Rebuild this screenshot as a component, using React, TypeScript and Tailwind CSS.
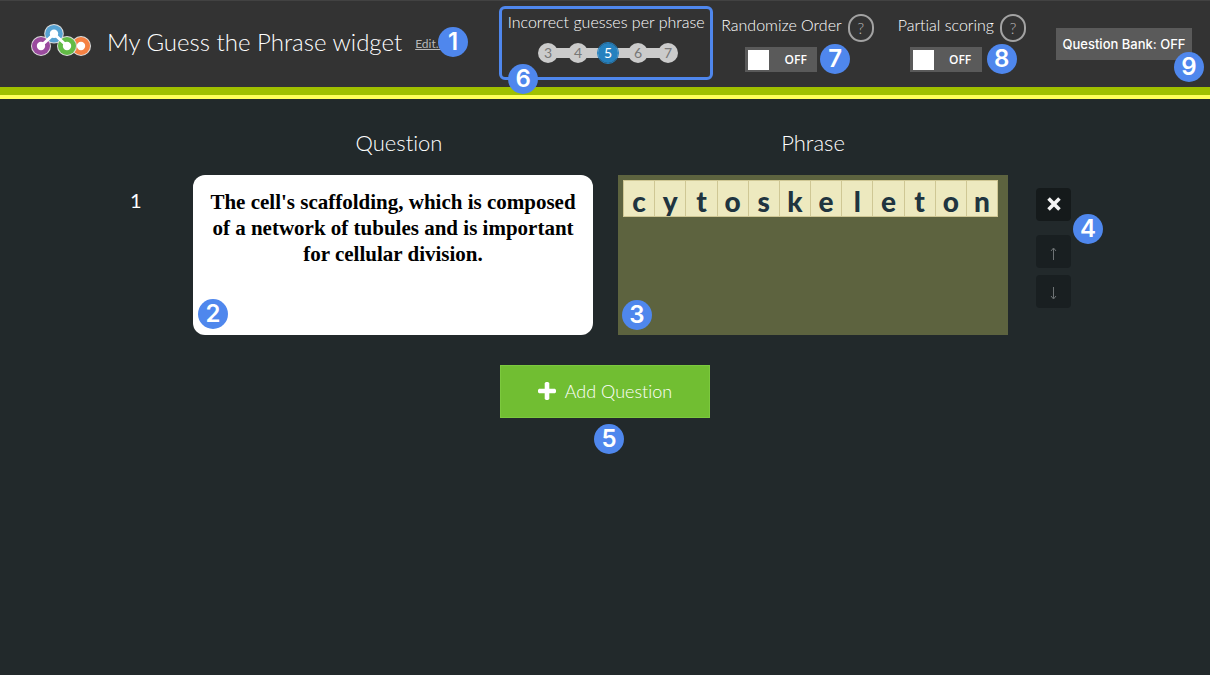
import { useState } from "react";
import type { ReactNode } from "react";

const LATO = "font-['Lato',sans-serif] [font-variant-ligatures:none]";

function Marker({ n, className }: { n: number; className: string }) {
  return (
    <span
      className={`pointer-events-none absolute z-10 flex size-[30px] items-center justify-center rounded-full bg-[#4f87ed] font-['Inter',sans-serif] text-[24px] leading-[30px] font-semibold text-white ${className}`}
    >
      {n}
    </span>
  );
}

function Logo() {
  return (
    <svg viewBox="0 0 62 36" className="h-9 w-[62px] shrink-0" aria-hidden="true">
      <circle cx="51" cy="22" r="10" fill="#dedede" />
      <circle cx="51" cy="22" r="9" fill="#f58143" />
      <circle cx="51" cy="22" r="4.2" fill="#fff" />
      <circle cx="24" cy="9.8" r="9.8" fill="#dedede" />
      <circle cx="24" cy="9.8" r="8.8" fill="#57a3d3" />
      <circle cx="11" cy="22" r="10" fill="#dedede" />
      <circle cx="11" cy="22" r="9" fill="#9a4b9e" />
      <circle cx="37" cy="22" r="10" fill="#dedede" />
      <circle cx="37" cy="22" r="9" fill="#62bb46" />
      <path d="M11 22 24 9.8 37 22" fill="none" stroke="#fff" strokeWidth="3" />
      <g fill="#fff">
        <circle cx="11" cy="22" r="4.2" />
        <circle cx="24" cy="9.8" r="4.2" />
        <circle cx="37" cy="22" r="4.2" />
      </g>
    </svg>
  );
}

function GuessPicker() {
  const [value, setValue] = useState(5);
  return (
    <fieldset className="relative h-[74px] w-[214px] rounded-md border-3 border-[#4f87ed]">
      <legend className="float-left w-full pt-[3px] text-center text-[16px] leading-5 whitespace-nowrap">
        Incorrect guesses per phrase
      </legend>
      <div className="clear-both flex items-center justify-center pt-[11px] pl-1">
        {[3, 4, 5, 6, 7].map((n, i) => (
          <div key={n} className="flex items-center">
            {i > 0 && <span className="-mx-1 h-2.5 w-[18px] bg-[#cbcbcb]" />}
            <label
              className={`relative flex size-5 cursor-pointer items-center justify-center rounded-full text-[14px] leading-5 font-normal ${
                n === value ? "z-10 bg-[#2581bf] text-white outline outline-[#2581bf]" : "bg-[#cbcbcb] text-[#777]"
              }`}
            >
              <input
                type="radio"
                name="guesses"
                className="sr-only"
                checked={n === value}
                onChange={() => setValue(n)}
              />
              {n}
            </label>
          </div>
        ))}
      </div>
      <Marker n={6} className="-bottom-[17px] left-[6px]" />
    </fieldset>
  );
}

function Toggle({ title, children, pad }: { title: string; children: ReactNode; pad: string }) {
  const [on, setOn] = useState(false);
  return (
    <div className="flex flex-col pt-2">
      <div className="flex items-center gap-1.5">
        <span className="-mt-1.5 text-[16px] leading-5 whitespace-nowrap">{title}</span>
        <button
          type="button"
          aria-label={`Help: ${title}`}
          className="flex h-7 w-[26px] items-center justify-center rounded-full border-2 border-[#a3a3a3] text-[16px] leading-5 font-light text-[#b5b5b5]"
        >
          ?
        </button>
      </div>
      <div className={`pt-[5px] ${pad}`}>
        <label className="relative flex h-[25px] w-[72px] cursor-pointer items-center bg-[#5a5a5a] px-[3px]">
          <input
            type="checkbox"
            role="switch"
            aria-label={title}
            className="sr-only"
            checked={on}
            onChange={() => setOn(!on)}
          />
          <span className="h-5 w-[21px] bg-white" />
          <span className="flex-1 pl-2 text-center font-['Open_Sans',sans-serif] text-[12px] leading-4 font-semibold">
            {on ? "ON" : "OFF"}
          </span>
          {children}
        </label>
      </div>
    </div>
  );
}

function Header() {
  return (
    <header className="border-b-4 border-[#ffff59] bg-[#333]">
      <div className="flex w-full items-start justify-between border-t border-b-8 border-t-[#424242] border-b-[#a0c000] pt-[5px] pr-[18px] pb-[7px] pl-[30px] text-white">
        <div className="flex h-[72px] items-center">
          <Logo />
          <h1 className="ml-[15px] text-[24px] leading-8 font-light whitespace-nowrap">My Guess the Phrase widget</h1>
          <div className="relative ml-[13px] w-[38px]">
            <a href="#edit" className="text-[12px] leading-4 text-[#b8b8b8] underline">
              Edit...
            </a>
            <Marker n={1} className="-top-[3px] left-[23px]" />
          </div>
        </div>
        <div className="flex items-start font-light">
          <GuessPicker />
          <div className="ml-2">
            <Toggle title="Randomize Order" pad="pl-6">
              <Marker n={7} className="-top-[3px] left-[75px]" />
            </Toggle>
          </div>
          <div className="ml-6">
            <Toggle title="Partial scoring" pad="pl-3">
              <Marker n={8} className="-top-[3px] left-[77px]" />
            </Toggle>
          </div>
          <button
            type="button"
            className="relative mt-[22px] ml-[30px] h-8 w-[136px] bg-[#5a5a5a] font-['Inter',sans-serif] text-[13px] leading-5 font-medium whitespace-nowrap"
          >
            Question Bank: OFF
            <Marker n={9} className="top-6 left-[118px]" />
          </button>
        </div>
      </div>
    </header>
  );
}

function PhraseTiles() {
  const [letters, setLetters] = useState("cytoskeleton".split(""));
  return (
    <div className="flex pr-[10px]">
      {letters.map((c, i) => (
        <input
          key={i}
          aria-label={`Phrase letter ${i + 1}`}
          maxLength={1}
          value={c}
          onChange={(e) => setLetters(letters.map((l, j) => (j === i ? e.target.value : l)))}
          className="h-[37px] min-w-0 flex-1 border-y border-r border-[#cfc794] bg-[#ede9bf] pt-1 text-center font-['Lato',sans-serif] text-[28px] leading-7 font-black text-[#20343f] first:border-l"
        />
      ))}
    </div>
  );
}

export default function App() {
  const [question, setQuestion] = useState(
    "The cell's scaffolding, which is composed of a network of tubules and is important for cellular division.",
  );
  return (
    <div className={`flex min-h-screen flex-col bg-[#22292b] text-white ${LATO}`}>
      <Header />
      <main className="mx-auto w-full max-w-[960px] pt-7">
        <div className="flex items-start">
          <div className="w-[68px] pt-[59px] pl-[5px] text-[20px] leading-7">1</div>
          <div className="flex-1">
            <label htmlFor="question" className="block pb-4 pl-3 text-center text-[22px] leading-8 font-light">
              Question
            </label>
            <div className="relative">
              <textarea
                id="question"
                value={question}
                onChange={(e) => setQuestion(e.target.value)}
                className="block h-40 w-full resize-none rounded-xl bg-white px-3.5 py-3.5 text-center font-['Liberation_Serif',serif] text-[21px] leading-[26px] font-bold text-black"
              />
              <Marker n={2} className="bottom-[6px] left-[5px]" />
            </div>
          </div>
          <div className="ml-[25px] w-[390px]">
            <h2 className="pb-4 text-center text-[22px] leading-8 font-light">Phrase</h2>
            <div className="relative h-40 bg-[#5d633f] p-[5px] pr-0">
              <PhraseTiles />
              <Marker n={3} className="bottom-[5px] left-1" />
            </div>
          </div>
          <div className="relative mr-3.5 ml-7 flex w-[35px] flex-col pt-[61px]">
            <button
              type="button"
              aria-label="Remove question"
              className="flex h-[33px] items-center justify-center rounded bg-[#151a1b] pb-0.5"
            >
              <svg viewBox="0 0 14 14" className="size-3.5" aria-hidden="true">
                <path d="M2.8 2.8 11.2 11.2M11.2 2.8 2.8 11.2" stroke="#f4f4f4" strokeWidth="3.6" strokeLinecap="square" />
              </svg>
            </button>
            <button
              type="button"
              aria-label="Move up"
              className="mt-3.5 flex h-[33px] items-center justify-center rounded bg-[#191f21]"
            >
              <svg viewBox="0 0 7 13" className="mt-1 h-[13px] w-[7px]" aria-hidden="true">
                <path d="M3.5 13V1.5M1 4 3.5 1 6 4" fill="none" stroke="#6d7274" />
              </svg>
            </button>
            <button
              type="button"
              aria-label="Move down"
              className="mt-[7px] flex h-[33px] items-center justify-center rounded bg-[#191f21]"
            >
              <svg viewBox="0 0 7 13" className="mt-1 h-[13px] w-[7px]" aria-hidden="true">
                <path d="M3.5 0V11.5M1 9 3.5 12 6 9" fill="none" stroke="#6d7274" />
              </svg>
            </button>
            <Marker n={4} className="top-[87px] left-[37px]" />
          </div>
        </div>
        <div className="flex justify-center pt-[30px]">
          <button
            type="button"
            className="relative flex h-[53px] w-[210px] items-center justify-center gap-[9px] border border-[#7cc93e] bg-[#71be32] pb-0.5 text-[18px] leading-6 font-light"
          >
            <svg viewBox="0 0 18 18" className="size-[18px]" aria-hidden="true">
              <path d="M9 1V17M1 9H17" stroke="#fff" strokeWidth="4.6" />
              <path d="M9 1V17M1 9H17" stroke="#fff" strokeWidth="3.4" strokeLinecap="round" />
            </svg>
            <span>Add Question</span>
            <Marker n={5} className="top-[58px] left-[93px]" />
          </button>
        </div>
      </main>
    </div>
  );
}
